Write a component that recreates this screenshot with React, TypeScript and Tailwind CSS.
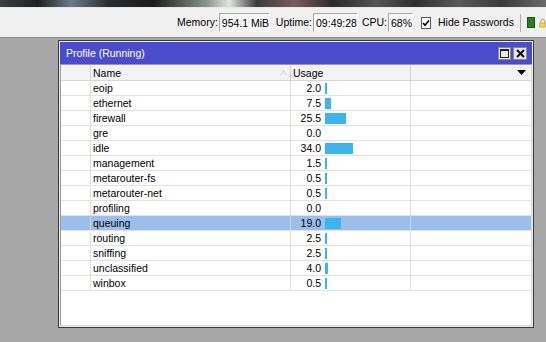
import React from "react";

const rows: { name: string; v: number }[] = [
  { name: "eoip", v: 2.0 },
  { name: "ethernet", v: 7.5 },
  { name: "firewall", v: 25.5 },
  { name: "gre", v: 0.0 },
  { name: "idle", v: 34.0 },
  { name: "management", v: 1.5 },
  { name: "metarouter-fs", v: 0.5 },
  { name: "metarouter-net", v: 0.5 },
  { name: "profiling", v: 0.0 },
  { name: "queuing", v: 19.0 },
  { name: "routing", v: 2.5 },
  { name: "sniffing", v: 2.5 },
  { name: "unclassified", v: 4.0 },
  { name: "winbox", v: 0.5 },
];

function barWidth(v: number) {
  if (v <= 0) return 0;
  return Math.max(2, Math.round(v * 0.82));
}

export default function App() {
  return (
    <div className="relative w-[546px] h-[342px] overflow-hidden bg-[#a7a7a7] font-['Liberation_Sans',Arial,sans-serif] text-[10.5px] text-black">
      {/* wallpaper strip */}
      <div className="h-[7px] bg-[linear-gradient(90deg,#3a3f44_0%,#1e2124_7%,#6b7b88_13%,#2a2d30_20%,#1a1a1a_28%,#8a9a8a_38%,#dfe6df_42%,#3a3a3a_47%,#7a5a60_54%,#2a2a2a_61%,#555555_69%,#2e2e2e_76%,#5a5a5a_84%,#3a3a3a_92%,#6a6a6a_100%)]" />
      <div className="h-px bg-[#e8e8e8]" />
      {/* toolbar */}
      <div className="h-[30px] bg-[#f0f0f0] border-b border-[#8c8c8c] flex items-center pl-[177px] whitespace-nowrap">
        <span className="pt-px">Memory:</span>
        <div className="ml-px w-[51px] h-[19px] border-l border-t border-[#a8a8a8] border-r border-b border-r-[#ffffff] border-b-[#ffffff] bg-[#f6f6f6] pl-[2px] leading-[18px]">954.1 MiB</div>
        <span className="ml-[6px] pt-px">Uptime:</span>
        <div className="ml-px w-[47px] h-[19px] border-l border-t border-[#a8a8a8] border-r border-b border-r-[#ffffff] border-b-[#ffffff] bg-[#f6f6f6] pl-[2px] leading-[18px]">09:49:28</div>
        <span className="ml-[4px] pt-px">CPU:</span>
        <div className="ml-px w-[32px] h-[19px] border-l border-t border-[#a8a8a8] border-r border-b border-r-[#ffffff] border-b-[#ffffff] bg-[#f6f6f6] pl-[2px] leading-[18px]">68%</div>
        <div className="ml-[8px] w-[12px] h-[12px] border border-[#5a5a5a] bg-white flex items-center justify-center">
          <svg width="8" height="8" viewBox="0 0 8 8">
            <path d="M1 4 L3 6.3 L7 1.5" stroke="#000" strokeWidth="1.7" fill="none" />
          </svg>
        </div>
        <span className="ml-[7px] pt-px">Hide Passwords</span>
        <div className="ml-[6px] w-px h-[18px] bg-[#b0b0b0]" />
        <div className="ml-[6px] w-[10px] h-[11px] bg-[#2f7d22] border border-[#1f5016]" />
        <svg className="ml-[4px]" width="10" height="12" viewBox="0 0 10 12">
          <path d="M2.5 6 V3.5 a2.5 2.5 0 0 1 5 0 V6" stroke="#b89a2a" strokeWidth="1.2" fill="none" />
          <rect x="1" y="6" width="8" height="5.5" fill="#f2d55a" stroke="#b89a2a" strokeWidth="0.8" />
        </svg>
      </div>

      {/* window */}
      <div className="absolute left-[58px] top-[40px] w-[476px] h-[288px] border border-[#3a3a3a] bg-[#ececec] p-px flex flex-col">
        {/* title bar */}
        <div className="h-[22px] shrink-0 bg-[#4b4bcd] text-white flex items-center pl-[6px] pr-[5px]">
          <span className="flex-1 pt-px">Profile (Running)</span>
          <div className="w-[13px] h-[13px] bg-[#e6e6e6] border border-[#8a8a8a] flex items-center justify-center">
            <div className="w-[9px] h-[9px] border border-[#222] border-t-2" />
          </div>
          <div className="ml-[2px] w-[14px] h-[13px] bg-[#e6e6e6] border border-[#8a8a8a] flex items-center justify-center">
            <svg width="9" height="9" viewBox="0 0 9 9">
              <path d="M1 1 L8 8 M8 1 L1 8" stroke="#111" strokeWidth="2" />
            </svg>
          </div>
        </div>
        {/* table */}
        <div className="flex-1 border-l border-t border-[#9a9a9a] border-r border-b border-r-[#d8d8d8] border-b-[#d8d8d8] bg-white flex flex-col overflow-hidden">
          {/* header */}
          <div className="h-[16px] shrink-0 flex bg-[#f3f3f3] border-b border-[#d6d6d6] leading-[16px]">
            <div className="w-[30px] border-r border-[#d6d6d6]" />
            <div className="w-[200px] border-r border-[#d6d6d6] pl-[2px] flex items-center">
              <span className="flex-1">Name</span>
              <svg className="mr-[3px]" width="7" height="6" viewBox="0 0 7 6">
                <path d="M0.5 5.5 L3.5 0.5 L6.5 5.5" stroke="#d0d0d0" strokeWidth="1" fill="none" />
              </svg>
            </div>
            <div className="w-[120px] border-r border-[#d6d6d6] pl-[2px]">Usage</div>
            <div className="flex-1" />
            <div className="w-[20px] flex items-center justify-center">
              <svg width="9" height="5" viewBox="0 0 9 5">
                <path d="M0 0 H9 L4.5 5 Z" fill="#000" />
              </svg>
            </div>
          </div>
          {/* rows */}
          {rows.map((r) => {
            const sel = r.name === "queuing";
            const w = barWidth(r.v);
            return (
              <div
                key={r.name}
                className={
                  sel
                    ? "h-[15px] shrink-0 flex bg-[#9bbfea] border-b border-[#e2e2e2] leading-[15px]"
                    : "h-[15px] shrink-0 flex border-b border-[#e2e2e2] leading-[15px]"
                }
              >
                <div className={sel ? "w-[30px] border-r border-[#c4d8f2]" : "w-[30px] border-r border-[#e2e2e2]"} />
                <div className={sel ? "w-[200px] border-r border-[#c4d8f2] pl-[2px]" : "w-[200px] border-r border-[#e2e2e2] pl-[2px]"}>
                  {r.name}
                </div>
                <div className={sel ? "w-[120px] border-r border-[#c4d8f2] flex items-center" : "w-[120px] border-r border-[#e2e2e2] flex items-center"}>
                  <span className="w-[30px] text-right">{r.v.toFixed(1)}</span>
                  {w > 0 && <div className="ml-[4px] h-[11px] bg-[#3bb5ec]" style={{ width: w }} />}
                </div>
                <div className="flex-1" />
              </div>
            );
          })}
          <div className="flex-1" />
        </div>
      </div>
    </div>
  );
}
